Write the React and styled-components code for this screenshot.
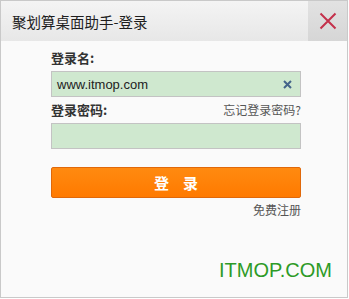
import React from "react";
import styled, { createGlobalStyle } from "styled-components";

const Global = createGlobalStyle`
  html, body { margin: 0; padding: 0; background: #ffffff; }
  body { font-family: "Noto Sans CJK SC", "Liberation Sans", sans-serif; }
`;

const Window = styled.div`
  width: 346px;
  height: 296px;
  border: 1px solid #c9c9c9;
  background: #fafafa;
  display: flex;
  flex-direction: column;
  overflow: hidden;
`;

const TitleBar = styled.div`
  height: 40px;
  display: flex;
  align-items: stretch;
  background: linear-gradient(#f4f4f4, #e7e7e7);
`;

const Title = styled.div`
  flex: 1;
  display: flex;
  align-items: center;
  padding-left: 11px;
  font-size: 14.5px;
  color: #1e1e1e;
`;

const CloseBtn = styled.div`
  width: 39px;
  display: flex;
  align-items: center;
  justify-content: center;
  background: linear-gradient(#e2e2e2, #d6d6d6);
`;

const Body = styled.div`
  flex: 1;
  display: flex;
  flex-direction: column;
  padding: 9px 46px 0 50px;
  position: relative;
`;

const Row = styled.div`
  display: flex;
  justify-content: space-between;
  align-items: center;
  height: 16px;
  line-height: 16px;
  margin-top: ${(p) => p.$mt || 0}px;
`;

const Label = styled.div`
  font-size: 13px;
  font-weight: bold;
  color: #333;
`;

const Link = styled.div`
  font-size: 12px;
  color: #555;
`;

const Input = styled.div`
  height: 24px;
  margin-top: ${(p) => p.$mt}px;
  border: 1px solid #c3c3c3;
  background: #cfe8cf;
  display: flex;
  align-items: center;
  justify-content: space-between;
  padding: 0 8px 0 5px;
  font-family: "Liberation Sans", "Noto Sans", sans-serif;
  font-size: 13px;
  color: #222;
`;

const Button = styled.div`
  margin-top: 18px;
  height: 29px;
  border: 1px solid #e0680a;
  border-radius: 2px;
  background: linear-gradient(#ff8a10, #ff7a00);
  display: flex;
  align-items: center;
  justify-content: center;
  color: #fff;
  font-size: 15px;
  font-weight: bold;
  letter-spacing: 14px;
  text-indent: 14px;
`;

const Footer = styled(Row)`
  justify-content: flex-end;
`;

const Watermark = styled.div`
  position: absolute;
  right: 15px;
  bottom: 15px;
  font-family: "Liberation Sans", sans-serif;
  font-size: 20px;
  color: #2d9a27;
`;

export default function App() {
  return (
    <>
      <Global />
      <Window>
        <TitleBar>
          <Title>聚划算桌面助手-登录</Title>
          <CloseBtn>
            <svg width="18" height="18" viewBox="0 0 18 18">
              <path d="M1.5 1.5 L16.5 16.5 M16.5 1.5 L1.5 16.5" stroke="#c4314b" strokeWidth="2" />
            </svg>
          </CloseBtn>
        </TitleBar>
        <Body>
          <Row>
            <Label>登录名:</Label>
          </Row>
          <Input $mt={5}>
            <span>www.itmop.com</span>
            <svg width="9" height="9" viewBox="0 0 9 9">
              <path d="M1 1 L8 8 M8 1 L1 8" stroke="#44648a" strokeWidth="2" />
            </svg>
          </Input>
          <Row $mt={5}>
            <Label>登录密码:</Label>
            <Link>忘记登录密码?</Link>
          </Row>
          <Input $mt={5} />
          <Button>登录</Button>
          <Footer $mt={4}>
            <Link>免费注册</Link>
          </Footer>
          <Watermark>ITMOP.COM</Watermark>
        </Body>
      </Window>
    </>
  );
}
